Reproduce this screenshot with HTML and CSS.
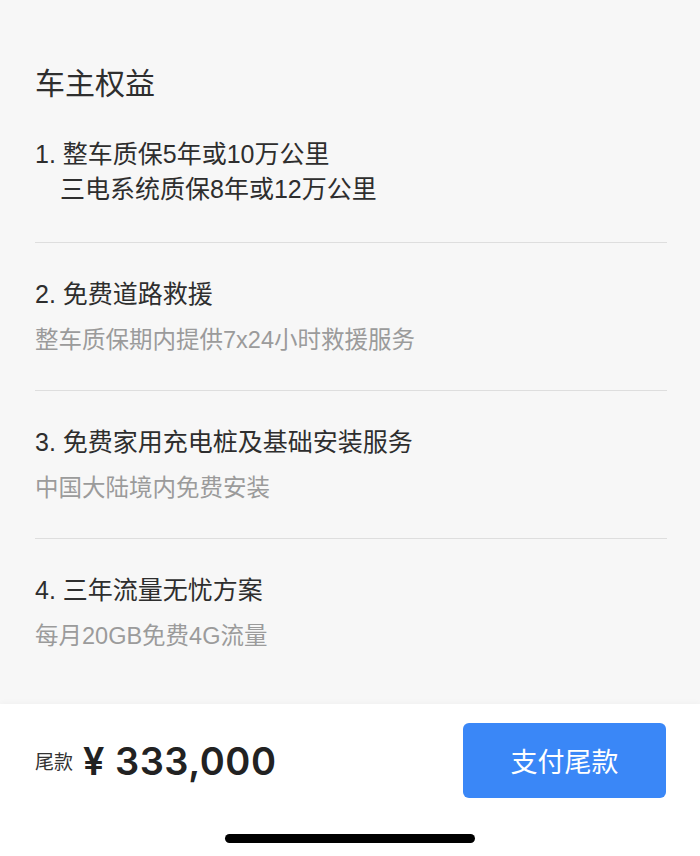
FILE: index.html
```html
<!DOCTYPE html>
<html lang="zh-CN">
<head>
    <meta charset="UTF-8">
    <meta name="viewport" content="width=device-width, initial-scale=1.0">
    <title>车主权益</title>
    <link rel="stylesheet" href="styles.css">
</head>
<body>
    <div class="page">
        <main class="perks">
            <h1 class="perks-title">车主权益</h1>

            <div class="perk perk-first">
                <p class="perk-name perk-hang">1. 整车质保5年或10万公里<br>三电系统质保8年或12万公里</p>
            </div>

            <div class="perk">
                <p class="perk-name">2. 免费道路救援</p>
                <p class="perk-desc">整车质保期内提供7x24小时救援服务</p>
            </div>

            <div class="perk">
                <p class="perk-name">3. 免费家用充电桩及基础安装服务</p>
                <p class="perk-desc">中国大陆境内免费安装</p>
            </div>

            <div class="perk">
                <p class="perk-name">4. 三年流量无忧方案</p>
                <p class="perk-desc">每月20GB免费4G流量</p>
            </div>
        </main>

        <footer class="paybar">
            <div class="paybar-row">
                <div class="price">
                    <span class="price-label">尾款</span>
                    <span class="price-value">¥ 333,000</span>
                </div>
                <button class="pay-button">支付尾款</button>
            </div>
            <div class="home-indicator"></div>
        </footer>
    </div>
</body>
</html>
```

FILE: styles.css
```css
* {
    box-sizing: border-box;
}
body {
    margin: 0;
    font-family: "Liberation Sans", "Noto Sans CJK SC", sans-serif;
    background-color: #f7f7f7;
    color: #2e2e2e;
}
p {
    margin: 0;
}
.page {
    display: flex;
    flex-direction: column;
    height: 100vh;
}
.perks {
    flex: 1;
    padding: 63px 33px 0 35px;
}
.perks-title {
    margin: 0 0 32px;
    font-size: 30px;
    font-weight: normal;
    line-height: 42px;
}
.perk {
    padding: 34px 0 33px;
    border-top: 1px solid #dedede;
}
.perk-first {
    padding: 0 0 35px;
    border-top: none;
}
.perk-name {
    font-size: 25px;
    line-height: 34px;
}
.perk-hang {
    line-height: 35px;
    padding-left: 25px;
    text-indent: -25px;
}
.perk-desc {
    margin-top: 12px;
    font-size: 23.5px;
    line-height: 34px;
    color: #9b9b9b;
}
.paybar {
    height: 152px;
    padding-top: 19px;
    background: #fff;
    box-shadow: 0 -1px 6px rgba(0, 0, 0, 0.03);
}
.paybar-row {
    display: flex;
    align-items: center;
    justify-content: space-between;
    padding: 0 34px 0 35px;
}
.price {
    display: flex;
    align-items: center;
    gap: 10px;
}
.price-label {
    font-size: 19px;
    color: #333;
}
.price-value {
    font-family: Inter, "Liberation Sans", sans-serif;
    font-size: 38px;
    font-weight: 600;
    letter-spacing: 0.5px;
    color: #222;
}
.pay-button {
    width: 203px;
    height: 75px;
    border: none;
    border-radius: 6px;
    background-color: #3a87f7;
    color: #fff;
    font-family: "Noto Sans CJK SC", sans-serif;
    font-size: 27px;
    cursor: pointer;
}
.home-indicator {
    width: 250px;
    height: 9px;
    margin: 36px auto 0;
    border-radius: 5px;
    background: #000;
}
```
